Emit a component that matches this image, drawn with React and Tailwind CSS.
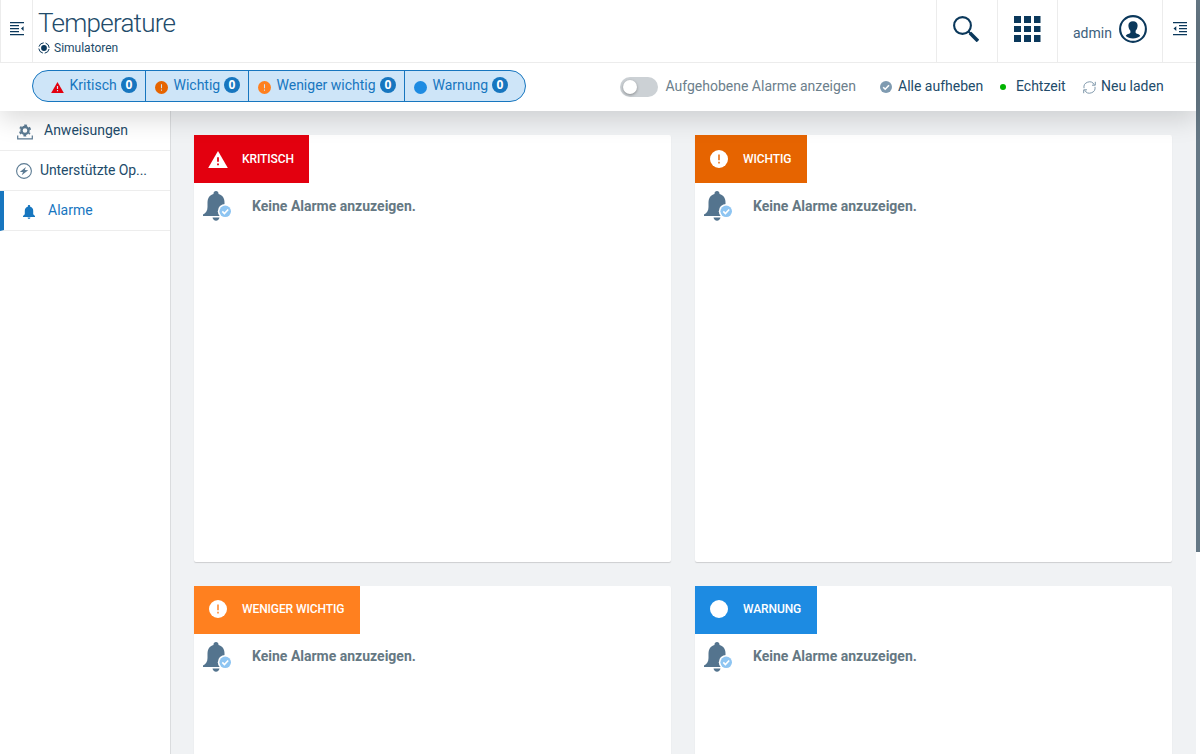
import React from "react";

const WarnTriangle = ({ className, mark }) => (
  <svg viewBox="0 0 22 19" className={className}>
    <path d="M11 0 22 19H0Z" fill="currentColor" />
    <path d="M10 7h2v5h-2zM10 14h2v2h-2z" fill={mark} />
  </svg>
);

const ExclCircle = ({ className, mark }) => (
  <svg viewBox="0 0 20 20" className={className}>
    <circle cx="10" cy="10" r="10" fill="currentColor" />
    <path d="M9.200 5h1.600v6.300H9.200zM9.200 13h1.600v2H9.200z" fill={mark} />
  </svg>
);

const Dot = ({ className }) => (
  <svg viewBox="0 0 20 20" className={className}>
    <circle cx="10" cy="10" r="10" fill="currentColor" />
  </svg>
);

const BellCheck = () => (
  <svg viewBox="0 0 30 31" className="h-[31px] w-[30px] shrink-0">
    <path
      d="M13 0c1.500 0 2.500 1 2.500 2.500v.6c4 1.200 6 4.300 6 8.400v5.500c0 3.500 1.500 5.500 4.500 7V25H0v-1.500c3-1.500 4.500-4 4.500-7.500v-4.500c0-4.100 2-7.200 6-8.400v-.6C10.500 1 11.500 0 13 0Z"
      fill="#54748e"
    />
    <path d="M9.500 26.500h7c-.3 2-1.700 3.200-3.500 3.200s-3.200-1.200-3.500-3.200Z" fill="#54748e" />
    <circle cx="22.200" cy="20.300" r="7.400" fill="#fff" />
    <circle cx="22.200" cy="20.300" r="5.800" fill="#8ec5f2" />
    <path d="m19.300 20.400 2.100 2.100 3.800-4" fill="none" stroke="#fff" strokeWidth="1.600" />
  </svg>
);

const CollapseLeft = () => (
  <svg viewBox="0 0 14 14" className="h-[14px] w-[14px]" fill="#0b385b">
    <path d="M0 0h14v1.200H0zM0 3h9v1.200H0zM0 6h9v1.200H0zM0 9h9v1.200H0zM0 12h14v1.200H0zM13.600 4.200v4.800L11 6.600z" />
  </svg>
);

const CollapseRight = () => (
  <svg viewBox="0 0 14 14" className="h-[14px] w-[14px]" fill="#0b385b">
    <path d="M0 0h14v1.200H0zM6 3h8v1.200H6zM6 6h8v1.200H6zM6 9h8v1.200H6zM0 12h14v1.200H0zM3.300 4.200v4.800L.5 6.600z" />
  </svg>
);

const Simulator = () => (
  <svg viewBox="0 0 12 12" className="h-3 w-3" fill="none" stroke="#0b385b">
    <circle cx="6" cy="6" r="5.200" strokeWidth="1" strokeDasharray="6.200 1.970" strokeDashoffset="-1" />
    <circle cx="6" cy="6" r="2.900" fill="#0b385b" stroke="none" />
  </svg>
);

const Search = () => (
  <svg viewBox="0 0 26 26" className="h-[26px] w-[26px]" fill="none" stroke="#0b385b">
    <circle cx="9.500" cy="9.500" r="8.400" strokeWidth="2.100" />
    <path d="m15.500 15.500 2.500 2.500" strokeWidth="2" />
    <path d="m17 17 8 8" strokeWidth="3.600" />
  </svg>
);

const Grid = () => (
  <svg viewBox="0 0 27 26" className="h-[26px] w-[27px]" fill="#0b385b">
    <path d="M0 0h7v7H0zM10 0h7v7h-7zM20 0h6.500v7H20zM0 10h7v6H0zM10 10h7v6h-7zM20 10h6.500v6H20zM0 19h7v7H0zM10 19h7v7h-7zM20 19h6.500v7H20z" />
  </svg>
);

const Avatar = () => (
  <svg viewBox="0 0 28 28" className="h-7 w-7">
    <circle cx="14" cy="14" r="12.900" fill="none" stroke="#0b385b" strokeWidth="2.100" />
    <path
      d="M14 6.300c3 0 4.600 1.700 4.600 4.300 0 2.200-.8 4.200-2 5.200v2c.3 1 4 1.300 4.600 3.200-1.800 1.700-4.300 2.400-7.200 2.400s-5.400-.7-7.200-2.400c.6-1.900 4.300-2.200 4.600-3.200v-2c-1.200-1-2-3-2-5.200 0-2.600 1.600-4.300 4.600-4.300Z"
      fill="#0b385b"
    />
  </svg>
);

const CheckCircle = () => (
  <svg viewBox="0 0 12 12" className="h-3 w-3">
    <circle cx="6" cy="6" r="6" fill="#7f9bb1" />
    <path d="m3.200 6.200 2 2 3.800-4" fill="none" stroke="#fff" strokeWidth="1.600" />
  </svg>
);

const Refresh = () => (
  <svg viewBox="0 0 13 13" className="h-[13px] w-[13px]" fill="none" stroke="#8099ac" strokeWidth="1">
    <path d="M1 7.200A5.500 5.500 0 0 1 11.300 3.800M12.300.8v3.400H9M12 5.800A5.500 5.500 0 0 1 1.700 9.200M.7 12.200V8.800H4" />
  </svg>
);

const GearTray = () => (
  <svg viewBox="0 0 16 16" className="h-4 w-4" fill="none" stroke="#5c7b93">
    <path d="M.7 11.500v3.300h14.600v-3.300" strokeWidth="1.200" />
    <circle cx="8" cy="6.500" r="3.500" strokeWidth="2.400" />
    <circle cx="8" cy="6.500" r="5.200" strokeWidth="1.800" strokeDasharray="2.600 2.845" strokeDashoffset="1.300" transform="rotate(30 8 6.500)" />
  </svg>
);

const BoltCircle = () => (
  <svg viewBox="0 0 16 16" className="h-4 w-4">
    <circle cx="8" cy="8" r="7.400" fill="none" stroke="#5c7b93" strokeWidth="1.100" />
    <path d="M9.900 3.900 3.800 8.900l3.200.1-1.300 3.300 6.500-5.100-3.400-.1Z" fill="#5c7b93" />
  </svg>
);

const Bell = () => (
  <svg viewBox="0 0 12 14" className="h-[14px] w-3" fill="#1776bf">
    <path d="M6 0c.8 0 1.200.5 1.200 1.200v.5c2 .5 3 2 3 4v3.500L12 11v1H0v-1l1.800-1.800V5.700c0-2 1-3.500 3-4v-.5C4.800.5 5.200 0 6 0ZM4.600 12.600h2.800c0 .8-.6 1.400-1.400 1.400s-1.400-.6-1.400-1.400Z" />
  </svg>
);

const Count = () => (
  <span className="mb-[2px] flex h-4 w-4 shrink-0 items-center justify-center rounded-full bg-[#1776bf] font-['Open_Sans',sans-serif] text-[12px] font-bold leading-4 text-white">
    0
  </span>
);

const Filter = ({ className, icon, label }) => (
  <button className={`flex h-full items-center border-[#1776bf] ${className}`}>
    <span className="flex w-[13px] shrink-0 justify-center pt-[2px]">{icon}</span>
    <span className="ml-[5.500px] grow whitespace-nowrap pb-[2px] text-left text-[14px] leading-[28px]">{label}</span>
    <Count />
  </button>
);

const Card = ({ icon, title, tabClass, titlePad = "", textPad = "pt-[5px]" }) => (
  <section className="rounded-[2px] bg-white shadow-[0_1px_1px_rgba(0,0,0,0.15)]">
    <h2 className={`flex h-12 items-center pl-[14px] text-[12px] font-medium tracking-[-0.1px] text-white ${tabClass} ${titlePad}`}>
      <span className="flex w-5 justify-center">{icon}</span>
      <span className="ml-[14px] whitespace-nowrap">{title}</span>
    </h2>
    <div className="flex pl-[9px] pt-2">
      <BellCheck />
      <p className={`ml-[19px] text-[14px] font-bold leading-5 text-[#657883] ${textPad}`}>Keine Alarme anzuzeigen.</p>
    </div>
  </section>
);

export default function App() {
  return (
    <div className="flex h-[754px] w-[1200px] overflow-hidden bg-white font-[Roboto,sans-serif] text-[#224b6a]">
      <div className="flex w-[1196px] flex-col bg-[#f0f2f4]">
        <div className="relative z-10 bg-white shadow-[0_8px_24px_rgba(0,0,0,0.15)]">
          <header className="flex h-[63px] border-b border-[#ececec] bg-white">
            <div className="flex w-[33px] items-center justify-center border-x border-[#ececec] pb-1">
              <CollapseLeft />
            </div>
            <div className="grow pl-[5px]">
              <h1 className="pt-2 text-[26px] font-light leading-[30px] tracking-[-0.75px]">Temperature</h1>
              <div className="flex items-center gap-1 pt-[1px] text-[12px] leading-[18px]">
                <Simulator />
                <span>Simulatoren</span>
              </div>
            </div>
            <div className="flex w-[61px] justify-center border-l border-[#ececec] pr-[2px] pt-4">
              <Search />
            </div>
            <div className="flex w-[60px] justify-center border-l border-[#ececec] pt-4">
              <Grid />
            </div>
            <div className="flex w-[105px] border-l border-[#ececec] pl-[15px] pt-[15px]">
              <span className="w-[46px] shrink-0 pt-2 text-[14px] leading-5 text-[#3d607c]">admin</span>
              <Avatar />
            </div>
            <div className="flex w-[34px] items-center justify-center border-l border-[#ececec] pb-1">
              <CollapseRight />
            </div>
          </header>
          <div className="flex h-12 pt-[7px]">
            <div className="ml-8 flex h-8 w-[494px] rounded-full border border-[#1776bf] bg-[#cee5f8] text-[#1776bf]">
              <Filter className="w-[113px] border-r pl-[18px] pr-2" label="Kritisch" icon={<WarnTriangle className="h-[11px] w-[13px] text-[#e3000f]" mark="#cee5f8" />} />
              <Filter className="w-[103px] border-r pl-[9px] pr-2" label="Wichtig" icon={<ExclCircle className="h-[13px] w-[13px] text-[#e66400]" mark="#cee5f8" />} />
              <Filter className="w-[156px] border-r pl-[9px] pr-2" label="Weniger wichtig" icon={<ExclCircle className="h-[13px] w-[13px] text-[#ff801f]" mark="#cee5f8" />} />
              <Filter className="w-[120px] pl-[9px] pr-[17px]" label="Warnung" icon={<Dot className="h-[13px] w-[13px] text-[#1d8be2]" />} />
            </div>
            <div className="ml-[94px] flex w-[260px] items-start">
              <span className="mt-[7px] flex h-5 w-[38px] items-center rounded-full bg-[#ccd1d5] pl-[3px]">
                <span className="h-[14px] w-[14px] rounded-full bg-white shadow-[0_1px_3px_rgba(0,0,0,0.35)]" />
              </span>
              <span className="ml-[7.500px] whitespace-nowrap pt-[6px] text-[14px] leading-5 text-[#6c808c]">Aufgehobene Alarme anzeigen</span>
            </div>
            <div className="flex pt-[6px] text-[14px] leading-5">
              <button className="flex w-[120px] gap-[6px]">
                <span className="pt-[5px]"><CheckCircle /></span>
                <span className="whitespace-nowrap">Alle aufheben</span>
              </button>
              <button className="flex w-[83px] gap-[10px]">
                <span className="mt-2 h-[6px] w-[6px] rounded-full bg-[#00b300]" />
                <span>Echtzeit</span>
              </button>
              <button className="flex gap-[5px]">
                <span className="pt-[5px]"><Refresh /></span>
                <span className="whitespace-nowrap">Neu laden</span>
              </button>
            </div>
          </div>
        </div>
        <div className="flex min-h-0 grow">
          <nav className="w-[171px] shrink-0 border-r border-[#dadcde] bg-white text-[14px] leading-[39px]">
            <a className="flex h-10 items-center border-b border-[#ededed] pl-[17px]">
              <span className="pt-[2px]"><GearTray /></span>
              <span className="ml-[11px]">Anweisungen</span>
            </a>
            <a className="flex h-10 items-center border-b border-[#ededed] pl-4">
              <span className="pt-[1px]"><BoltCircle /></span>
              <span className="ml-2 tracking-[-0.1px]">Unterstützte Op...</span>
            </a>
            <a className="flex h-10 items-center border-b border-l-4 border-b-[#ededed] border-l-[#1776bf] pl-[19px] text-[#1776bf]">
              <span className="pt-[2px]"><Bell /></span>
              <span className="ml-[13px]">Alarme</span>
            </a>
          </nav>
          <main className="grid grow auto-rows-[427px] grid-cols-[477px_477px] gap-6 pl-[23px] pt-6">
            <Card title="KRITISCH" tabClass="w-[115px] bg-[#e3000f]" icon={<WarnTriangle className="h-[17px] w-5" mark="#e3000f" />} />
            <Card title="WICHTIG" tabClass="w-[112px] bg-[#e66400]" icon={<ExclCircle className="h-[18px] w-[18px]" mark="#e66400" />} />
            <Card title="WENIGER WICHTIG" titlePad="pb-[2px]" textPad="pt-1" tabClass="w-[166px] bg-[#ff801f]" icon={<ExclCircle className="h-[18px] w-[18px]" mark="#ff801f" />} />
            <Card title="WARNUNG" titlePad="pb-[2px]" textPad="pt-1" tabClass="w-[122px] bg-[#1d8be2]" icon={<Dot className="h-[18px] w-[18px]" />} />
          </main>
        </div>
      </div>
      <div className="h-[552px] w-1 bg-[#657885]" />
    </div>
  );
}
